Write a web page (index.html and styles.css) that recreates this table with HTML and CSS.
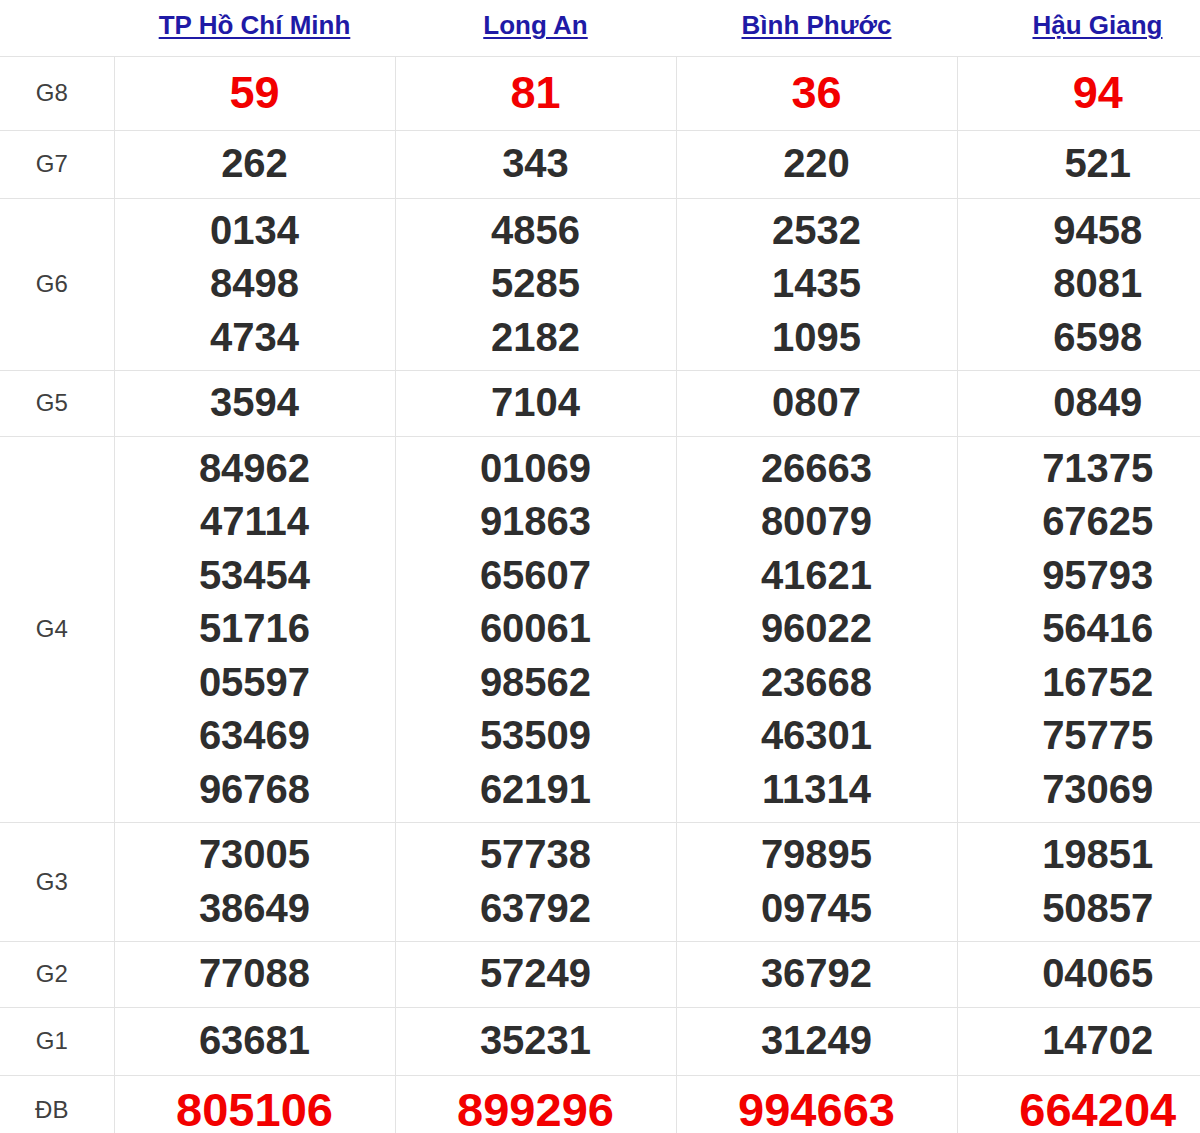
FILE: index.html
```html
<!DOCTYPE html>
<html lang="vi">
<head>
<meta charset="utf-8">
<title>Kết quả xổ số</title>
<link rel="stylesheet" href="styles.css">
</head>
<body>
<div class="wrap">
<table class="kq">
  <colgroup>
    <col class="c-label"><col class="c-prov"><col class="c-prov"><col class="c-prov"><col class="c-prov">
  </colgroup>
  <thead>
    <tr class="r-head">
      <th></th>
      <th><a href="#">TP Hồ Chí Minh</a></th>
      <th><a href="#">Long An</a></th>
      <th><a href="#">Bình Phước</a></th>
      <th><a href="#">Hậu Giang</a></th>
    </tr>
  </thead>
  <tbody>
    <tr class="r-g8">
      <td class="lbl">G8</td>
      <td class="num red big">59</td><td class="num red big">81</td><td class="num red big">36</td><td class="num red big">94</td>
    </tr>
    <tr class="r-g7">
      <td class="lbl">G7</td>
      <td class="num">262</td><td class="num">343</td><td class="num">220</td><td class="num">521</td>
    </tr>
    <tr class="r-g6">
      <td class="lbl">G6</td>
      <td class="num"><div>0134</div><div>8498</div><div>4734</div></td>
      <td class="num"><div>4856</div><div>5285</div><div>2182</div></td>
      <td class="num"><div>2532</div><div>1435</div><div>1095</div></td>
      <td class="num"><div>9458</div><div>8081</div><div>6598</div></td>
    </tr>
    <tr class="r-g5">
      <td class="lbl">G5</td>
      <td class="num">3594</td><td class="num">7104</td><td class="num">0807</td><td class="num">0849</td>
    </tr>
    <tr class="r-g4">
      <td class="lbl">G4</td>
      <td class="num"><div>84962</div><div>47114</div><div>53454</div><div>51716</div><div>05597</div><div>63469</div><div>96768</div></td>
      <td class="num"><div>01069</div><div>91863</div><div>65607</div><div>60061</div><div>98562</div><div>53509</div><div>62191</div></td>
      <td class="num"><div>26663</div><div>80079</div><div>41621</div><div>96022</div><div>23668</div><div>46301</div><div>11314</div></td>
      <td class="num"><div>71375</div><div>67625</div><div>95793</div><div>56416</div><div>16752</div><div>75775</div><div>73069</div></td>
    </tr>
    <tr class="r-g3">
      <td class="lbl">G3</td>
      <td class="num"><div>73005</div><div>38649</div></td>
      <td class="num"><div>57738</div><div>63792</div></td>
      <td class="num"><div>79895</div><div>09745</div></td>
      <td class="num"><div>19851</div><div>50857</div></td>
    </tr>
    <tr class="r-g2">
      <td class="lbl">G2</td>
      <td class="num">77088</td><td class="num">57249</td><td class="num">36792</td><td class="num">04065</td>
    </tr>
    <tr class="r-g1">
      <td class="lbl">G1</td>
      <td class="num">63681</td><td class="num">35231</td><td class="num">31249</td><td class="num">14702</td>
    </tr>
    <tr class="r-db">
      <td class="lbl">ĐB</td>
      <td class="num red db">805106</td><td class="num red db">899296</td><td class="num red db">994663</td><td class="num red db">664204</td>
    </tr>
  </tbody>
</table>
</div>
</body>
</html>
```

FILE: styles.css
```css
html, body {
  margin: 0;
  padding: 0;
  background: #fff;
  overflow: hidden;
}
.wrap {
  width: 1200px;
  overflow: hidden;
}
.kq {
  width: 1238px;
  border-collapse: collapse;
  table-layout: fixed;
  font-family: "Liberation Sans", Arial, sans-serif;
}
.c-label { width: 114px; }
.c-prov { width: 281px; }

.r-head th {
  height: 56px;
  padding: 0 0 4px;
  box-sizing: border-box;
  border-bottom: 1px solid #e3e3e3;
  text-align: center;
  vertical-align: middle;
  font-size: 26px;
  font-weight: bold;
}
.r-head th a {
  color: #1f1aa6;
  text-decoration: underline;
  text-underline-offset: 3px;
  text-decoration-thickness: 2px;
}

.kq td {
  border-top: 1px solid #e3e3e3;
  border-bottom: 1px solid #e3e3e3;
  padding: 4px 0;
  box-sizing: border-box;
  text-align: center;
  vertical-align: middle;
}
.kq td + td { border-left: 1px solid #e3e3e3; }
.kq td.lbl {
  font-size: 24px;
  color: #404040;
  font-weight: normal;
  padding-right: 10px;
}
.kq td.num {
  font-size: 40px;
  font-weight: bold;
  line-height: 53.5px;
  color: #2e2e2e;
}
.kq td.red { color: #f20000; }
.kq td.big { font-size: 45px; }
.kq td.db { font-size: 47px; }

.r-g8 td { height: 74px; }
.r-g7 td { height: 68px; }
.r-g6 td { height: 172px; }
.r-g5 td { height: 66px; }
.r-g4 td { height: 386px; }
.r-g3 td { height: 119px; }
.r-g2 td { height: 66px; }
.r-g1 td { height: 68px; }
.r-db td { height: 70px; }
```
